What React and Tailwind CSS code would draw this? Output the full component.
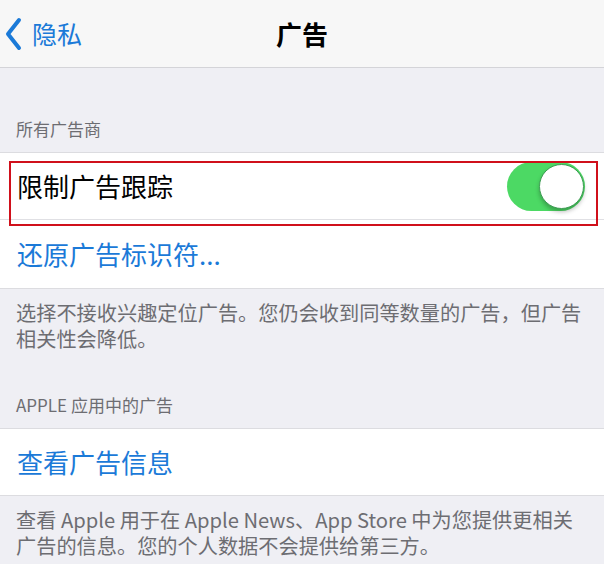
const font = { fontFamily: '"Noto Sans CJK SC", "Noto Sans", sans-serif' };

function Toggle() {
  return (
    <div className="w-[78px] h-[49px] rounded-full bg-[#4cd964] relative shrink-0">
      <div className="absolute right-[1px] top-[2px] w-[45px] h-[45px] rounded-full bg-white border border-[#3f9d55] shadow-[0_3px_4px_rgba(0,0,0,0.25)]" />
    </div>
  );
}

function SectionHeader({ children, className = "" }) {
  return (
    <div className={`flex items-end px-4 pb-3 text-[17px] leading-[22px] text-[#6d6d72] ${className}`}>
      {children}
    </div>
  );
}

function Footer({ children }) {
  return (
    <p className="px-4 pt-[11px] text-[20.2px] leading-[26px] text-[#6d6d72]">{children}</p>
  );
}

export default function App() {
  return (
    <div className="w-[604px] h-[564px] bg-[#efeff4] overflow-hidden relative" style={font}>
      <header className="h-[68px] bg-[#f7f7f7] border-b border-[#d4d4d8] flex items-center relative">
        <div className="flex items-center pl-[5px] text-[#1b7ad8]">
          <svg width="17" height="34" viewBox="0 0 17 34" fill="none">
            <path d="M14 3 L3 17 L14 31" stroke="currentColor" strokeWidth="4" strokeLinecap="round" strokeLinejoin="round" />
          </svg>
          <span className="ml-[10px] text-[25px] leading-none">隐私</span>
        </div>
        <h1 className="absolute left-0 right-0 text-center text-[26px] font-semibold text-black leading-none">
          广告
        </h1>
      </header>

      <SectionHeader className="h-[84px]">所有广告商</SectionHeader>

      <div className="bg-white border-y border-[#dcdce0]">
        <div className="h-[67px] flex items-center pl-[17px] pr-[19px] border-b border-[#e0e0e4]">
          <span className="flex-1 text-[26px] text-black leading-none">限制广告跟踪</span>
          <Toggle />
        </div>
        <div className="h-[68px] flex items-center pl-[17px]">
          <span className="text-[26px] text-[#1b7ad8] leading-none">还原广告标识符...</span>
        </div>
      </div>

      <Footer>
        选择不接收兴趣定位广告。您仍会收到同等数量的广告，但广告
        <br />
        相关性会降低。
      </Footer>

      <SectionHeader className="h-[76px]">APPLE 应用中的广告</SectionHeader>

      <div className="bg-white border-y border-[#dcdce0]">
        <div className="h-[66px] flex items-center pl-[17px]">
          <span className="text-[26px] text-[#1b7ad8] leading-none">查看广告信息</span>
        </div>
      </div>

      <Footer>
        查看 Apple 用于在 Apple News、App Store 中为您提供更相关
        <br />
        广告的信息。您的个人数据不会提供给第三方。
      </Footer>

      <div className="absolute left-[9px] top-[161px] w-[589px] h-[65px] border-2 border-[#d0101b] pointer-events-none" />
    </div>
  );
}
